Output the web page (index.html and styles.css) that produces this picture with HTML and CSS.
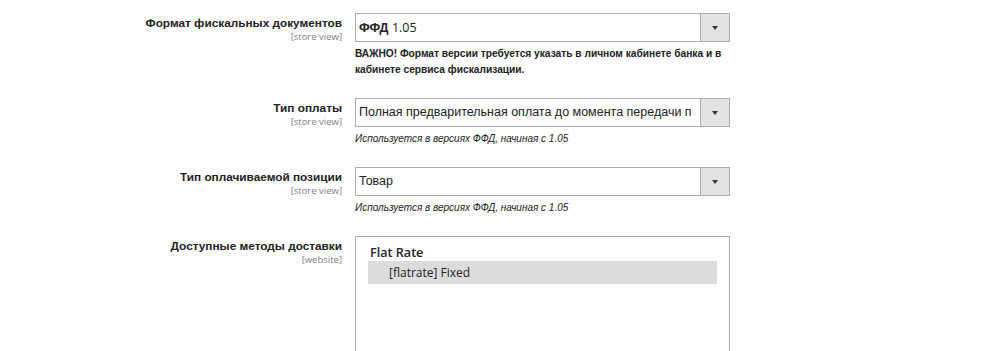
FILE: index.html
```html
<!DOCTYPE html>
<html lang="ru">
<head>
<meta charset="utf-8">
<link rel="stylesheet" href="styles.css">
</head>
<body>
<div class="form">
  <div class="row">
    <div class="label">
      <div class="title">Формат фискальных документов</div>
      <div class="scope">[store view]</div>
    </div>
    <div class="control">
      <div class="select"><span class="value"><b class="cy">ФФД</b> <span class="lat">1.05</span></span><span class="arrow"></span></div>
      <div class="note bold">ВАЖНО! Формат версии требуется указать в личном кабинете банка и в кабинете сервиса фискализации.</div>
    </div>
  </div>
  <div class="row">
    <div class="label">
      <div class="title">Тип оплаты</div>
      <div class="scope">[store view]</div>
    </div>
    <div class="control">
      <div class="select"><span class="value">Полная предварительная оплата до момента передачи предмета расчёта</span><span class="arrow"></span></div>
      <div class="note italic">Используется в версиях ФФД, начиная с 1.05</div>
    </div>
  </div>
  <div class="row">
    <div class="label">
      <div class="title">Тип оплачиваемой позиции</div>
      <div class="scope">[store view]</div>
    </div>
    <div class="control">
      <div class="select"><span class="value">Товар</span><span class="arrow"></span></div>
      <div class="note italic">Используется в версиях ФФД, начиная с 1.05</div>
    </div>
  </div>
  <div class="row">
    <div class="label">
      <div class="title">Доступные методы доставки</div>
      <div class="scope">[website]</div>
    </div>
    <div class="control">
      <div class="multi">
        <div class="group">Flat Rate</div>
        <div class="option">[flatrate] Fixed</div>
      </div>
    </div>
  </div>
</div>
</body>
</html>
```
FILE: styles.css
```css
html, body {
  margin: 0;
  padding: 0;
  background: #ffffff;
}
body {
  font-family: "Liberation Sans", Arial, sans-serif;
  color: #262626;
  height: 351px;
  overflow: hidden;
}
.form {
  padding-top: 13px;
  display: flex;
  flex-direction: column;
  gap: 20px;
}
.row {
  display: grid;
  grid-template-columns: 342px 375px;
  column-gap: 13px;
}
.label {
  text-align: right;
  padding-top: 3px;
}
.title {
  font-weight: bold;
  font-size: 11.8px;
  line-height: 14px;
  color: #222222;
}
.scope {
  font-family: "Open Sans", sans-serif;
  font-size: 9.5px;
  line-height: 14px;
  color: #808080;
}
.select {
  height: 29px;
  box-sizing: border-box;
  border: 1px solid #adadad;
  display: flex;
  align-items: stretch;
  background: #fff;
}
.value {
  flex: 1;
  min-width: 0;
  white-space: nowrap;
  overflow: hidden;
  margin: 0 9px 0 3px;
  font-size: 12.5px;
  line-height: 27px;
  color: #222222;
}
.cy {
  font-weight: bold;
}
.lat {
  font-family: "Open Sans", sans-serif;
}
.arrow {
  width: 28px;
  flex: none;
  background: #e3e3e3;
  border-left: 1px solid #adadad;
  position: relative;
}
.arrow::after {
  content: "";
  position: absolute;
  left: 11px;
  top: 12px;
  border-left: 3.5px solid transparent;
  border-right: 3.5px solid transparent;
  border-top: 4px solid #333;
}
.note {
  color: #222222;
  margin-top: 4px;
  line-height: 16px;
}
.note.bold {
  font-weight: bold;
  font-size: 10.2px;
}
.note.italic {
  font-style: italic;
  font-size: 10px;
}
.multi {
  border: 1px solid #adadad;
  height: 140px;
  box-sizing: border-box;
  padding: 8px 12px 0 12px;
  font-family: "Open Sans", sans-serif;
  color: #222222;
}
.group {
  font-weight: 600;
  font-size: 12.6px;
  line-height: 15px;
  padding-left: 2px;
}
.option {
  background: #dcdcdc;
  font-size: 12px;
  line-height: 23px;
  padding-left: 21px;
  margin-top: 1px;
}
```
